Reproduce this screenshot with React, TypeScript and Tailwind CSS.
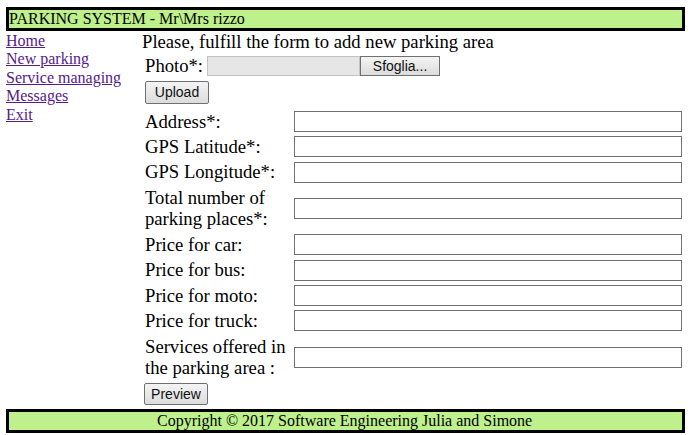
import React from 'react';

const navLinks = ['Home', 'New parking', 'Service managing', 'Messages', 'Exit'];

const fields: string[][] = [
    ['Address*:'],
    ['GPS Latitude*:'],
    ['GPS Longitude*:'],
    ['Total number of', 'parking places*:'],
    ['Price for car:'],
    ['Price for bus:'],
    ['Price for moto:'],
    ['Price for truck:'],
    ['Services offered in', 'the parking area :'],
];

const btn =
    'border border-[#707070] rounded-[2px] bg-gradient-to-b from-[#f4f4f4] to-[#dcdcdc] text-[14px] text-[#111] font-["Liberation_Sans",Arial,sans-serif] leading-none';

const App: React.FC = () => {
    return (
        <div className="w-[692px] h-[435px] bg-white pt-[7px] px-[6px] font-['Liberation_Serif','Times_New_Roman',serif] text-black">
            <div className="w-[679px] h-[24px] border-[3px] border-black bg-[#bef08c] text-[16px] leading-[18px]">
                PARKING SYSTEM - Mr\Mrs rizzo
            </div>

            <div className="flex">
                <nav className="w-[136px] flex flex-col text-[16px] leading-[18.4px] pt-[1px]">
                    {navLinks.map((l) => (
                        <a key={l} href="#" className="text-[#551a8b] underline w-fit">
                            {l}
                        </a>
                    ))}
                </nav>

                <div className="flex flex-col w-[543px] text-[18.67px]">
                    <p className="h-[21.5px] leading-[21.5px]">Please, fulfill the form to add new parking area</p>

                    <div className="h-[26px] flex items-center pl-[3px]">
                        <span>Photo*:</span>
                        <div className="ml-[4px] flex h-[20px]">
                            <div className="w-[153px] h-full bg-[#e6e6e6] border border-[#c4c4c4]" />
                            <button className={`${btn} w-[80px] h-full border-[#8c8c8c] rounded-none text-[13px]`}>Sfoglia...</button>
                        </div>
                    </div>

                    <button className={`${btn} ml-[3px] mt-[2px] w-[64px] h-[23px]`}>Upload</button>

                    <table className="mt-[4px] border-separate border-spacing-[2px]">
                        <tbody>
                            {fields.map((lines) => (
                                <tr key={lines[0]}>
                                    <td className="p-[1px] w-[147px] leading-[21.47px] align-middle">
                                        {lines.map((t) => (
                                            <div key={t}>{t}</div>
                                        ))}
                                    </td>
                                    <td className="p-[1px] align-middle">
                                        <input type="text" className="block w-[388px] h-[21px] border border-[#707070] bg-white" />
                                    </td>
                                </tr>
                            ))}
                        </tbody>
                    </table>

                    <button className={`${btn} ml-[2px] mt-[1px] w-[64px] h-[22px]`}>Preview</button>
                </div>
            </div>

            <div className="mt-[4px] w-[679px] h-[24px] border-[3px] border-black bg-[#bef08c] text-[16px] leading-[18px] pl-[148px]">
                Copyright © 2017 Software Engineering Julia and Simone
            </div>
        </div>
    );
};

export default App;
